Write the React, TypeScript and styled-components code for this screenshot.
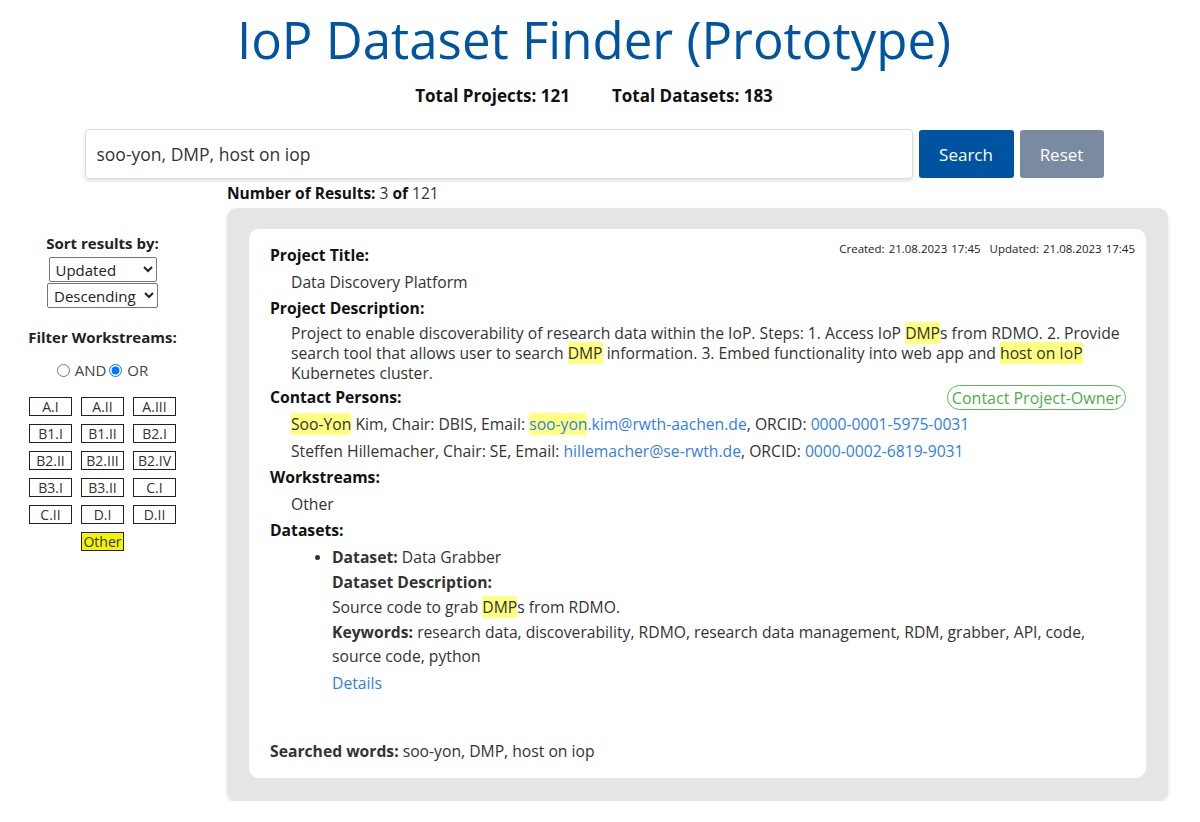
import styled, { createGlobalStyle } from 'styled-components'

const GlobalStyle = createGlobalStyle`
    body {
        margin: 0;
        background: #ffffff;
        font-family: "Open Sans", "Noto Sans", sans-serif;
        color: #333333;
    }
`

const Page = styled.div`
    width: 1188px;
    display: flex;
    flex-direction: column;
    align-items: center;
`

const Title = styled.h1`
    margin: 7px 0 0 0;
    font-size: 51px;
    font-weight: 500;
    color: #0055a2;
    line-height: 64px;
`

const Stats = styled.div`
    display: flex;
    gap: 42px;
    margin-top: 13px;
    font-size: 17px;
    font-weight: 700;
    color: #111;
`

const SearchRow = styled.form`
    display: flex;
    gap: 6px;
    margin-top: 22px;
    align-items: center;
`

const SearchInput = styled.input`
    width: 828px;
    height: 50px;
    box-sizing: border-box;
    border: 1px solid #dcdcdc;
    border-radius: 4px;
    box-shadow: 0 2px 4px rgba(0, 0, 0, 0.12);
    padding: 0 11px;
    font-family: inherit;
    font-size: 17.5px;
    color: #333;
`

const Button = styled.button<{ $variant: 'primary' | 'muted' }>`
    height: 48px;
    padding: 0 18px;
    border: none;
    border-radius: 3px;
    font-family: inherit;
    font-size: 17px;
    color: #fff;
    background: ${p => (p.$variant === 'primary' ? '#0053a0' : '#7a8ba1')};
    min-width: ${p => (p.$variant === 'primary' ? '95px' : '84px')};
`

const Body = styled.div`
    display: flex;
    align-self: stretch;
`

const Sidebar = styled.aside`
    width: 205px;
    display: flex;
    flex-direction: column;
    align-items: center;
    padding-top: 54px;
    flex-shrink: 0;
`

const SideHeading = styled.div`
    font-size: 15px;
    font-weight: 700;
    color: #222;
    margin-bottom: 4px;
`

const SelectStack = styled.div`
    display: flex;
    flex-direction: column;
    align-items: center;
    gap: 1px;
    margin-bottom: 19px;
`

const Select = styled.select<{ $w: number }>`
    width: ${p => p.$w}px;
    font-family: inherit;
    font-size: 15px;
    height: 25px;
    border: 1px solid #767676;
    border-radius: 2px;
    background: #fff;
    color: #222;
    padding: 0 2px;
`

const RadioRow = styled.div`
    display: flex;
    align-items: center;
    gap: 3px;
    font-size: 15px;
    color: #444;
    margin: 9px 0 17px;

    input {
        margin: 0 2px 0 0;
        width: 13px;
        height: 13px;
    }
`

const WsGrid = styled.div`
    display: grid;
    grid-template-columns: repeat(3, 43px);
    column-gap: 9px;
    row-gap: 8px;
    justify-items: center;
`

const WsButton = styled.button<{ $active?: boolean }>`
    width: 43px;
    height: 19px;
    padding: 0;
    box-sizing: border-box;
    border: 1.5px solid #222;
    background: ${p => (p.$active ? '#f4f400' : '#fff')};
    font-family: inherit;
    font-size: 14px;
    color: #333;
    line-height: 15px;
    white-space: nowrap;
`

const Main = styled.main`
    flex: 1;
    padding-left: 22px;
    padding-right: 20px;
    margin-top: 3px;
`

const ResultCount = styled.div`
    font-size: 15.5px;
    color: #333;
    margin-bottom: 4px;

    b {
        color: #111;
    }
`

const Panel = styled.section`
    background: #e5e5e5;
    border-radius: 10px;
    padding: 21px 22px 23px;
    box-shadow: 0 2px 4px rgba(0, 0, 0, 0.12);
`

const Card = styled.article`
    background: #fff;
    border-radius: 10px;
    padding: 10px 21px 16px;
    position: relative;
    font-size: 15.7px;
`

const Dates = styled.div`
    position: absolute;
    top: 12px;
    right: 11px;
    font-size: 11.5px;
    color: #222;
    word-spacing: 1px;

    span + span {
        margin-left: 9px;
    }
`

const Label = styled.div<{ $gap?: number }>`
    font-weight: 700;
    color: #111;
    line-height: 22px;
    margin-top: ${p => p.$gap ?? 5}px;
`

const Value = styled.div<{ $gap?: number }>`
    padding-left: 21px;
    line-height: 20px;
    margin-top: ${p => p.$gap ?? 6}px;
`

const ContactHeader = styled.div`
    display: flex;
    justify-content: space-between;
    align-items: center;
`

const ContactButton = styled.button`
    height: 25px;
    border: 1px solid #5cb85c;
    border-radius: 13px;
    background: #fff;
    color: #4cae4c;
    font-family: inherit;
    font-size: 16px;
    padding: 0 4px;
    margin-right: -1px;
    margin-top: 2px;
`

const ContactLine = styled.div<{ $gap?: number }>`
    padding-left: 21px;
    line-height: 22px;
    margin-top: ${p => p.$gap ?? 5}px;
`

const Link = styled.a`
    color: #2f80ed;
    text-decoration: none;
`

const Mark = styled.mark`
    background: #ffff80;
    color: inherit;
    padding: 0;
`

const DatasetList = styled.ul`
    margin: 4px 0 0 0;
    padding-left: 62px;
    line-height: 24px;

    li::marker {
        font-size: 14px;
    }
`

const DatasetLine = styled.div<{ $gap?: number }>`
    margin-top: ${p => p.$gap ?? 1}px;
`

const Searched = styled.div`
    margin-top: 45px;
    line-height: 22px;
`

const workstreams = [
    'A.I', 'A.II', 'A.III',
    'B1.I', 'B1.II', 'B2.I',
    'B2.II', 'B2.III', 'B2.IV',
    'B3.I', 'B3.II', 'C.I',
    'C.II', 'D.I', 'D.II',
]

export default function App() {
    return (
        <>
            <GlobalStyle />
            <Page>
                <Title>IoP Dataset Finder (Prototype)</Title>
                <Stats>
                    <span>Total Projects: 121</span>
                    <span>Total Datasets: 183</span>
                </Stats>
                <SearchRow onSubmit={e => e.preventDefault()}>
                    <SearchInput defaultValue="soo-yon, DMP, host on iop" />
                    <Button $variant="primary">Search</Button>
                    <Button $variant="muted" type="button">Reset</Button>
                </SearchRow>

                <Body>
                    <Sidebar>
                        <SideHeading>Sort results by:</SideHeading>
                        <SelectStack>
                            <Select $w={108} defaultValue="updated">
                                <option value="updated">Updated</option>
                                <option value="created">Created</option>
                            </Select>
                            <Select $w={111} defaultValue="desc">
                                <option value="desc">Descending</option>
                                <option value="asc">Ascending</option>
                            </Select>
                        </SelectStack>
                        <SideHeading>Filter Workstreams:</SideHeading>
                        <RadioRow>
                            <input type="radio" name="mode" id="and" />
                            <label htmlFor="and">AND</label>
                            <input type="radio" name="mode" id="or" defaultChecked />
                            <label htmlFor="or">OR</label>
                        </RadioRow>
                        <WsGrid>
                            {workstreams.map(w => (
                                <WsButton key={w}>{w}</WsButton>
                            ))}
                            <span />
                            <WsButton $active>Other</WsButton>
                        </WsGrid>
                    </Sidebar>

                    <Main>
                        <ResultCount>
                            <b>Number of Results:</b> 3 <b>of</b> 121
                        </ResultCount>
                        <Panel>
                            <Card>
                                <Dates>
                                    <span>Created: 21.08.2023 17:45</span>
                                    <span>Updated: 21.08.2023 17:45</span>
                                </Dates>
                                <Label>Project Title:</Label>
                                <Value>Data Discovery Platform</Value>
                                <Label>Project Description:</Label>
                                <Value $gap={4}>
                                    Project to enable discoverability of research data within the IoP. Steps: 1. Access IoP <Mark>DMP</Mark>s from RDMO. 2. Provide search tool that allows user to search <Mark>DMP</Mark> information. 3. Embed functionality into web app and <Mark>host on IoP</Mark> Kubernetes cluster.
                                </Value>
                                <ContactHeader>
                                    <Label $gap={0}>Contact Persons:</Label>
                                    <ContactButton>Contact Project-Owner</ContactButton>
                                </ContactHeader>
                                <ContactLine $gap={3}>
                                    <Mark>Soo-Yon</Mark> Kim, Chair: DBIS, Email: <Link href="#"><Mark>soo-yon</Mark>.kim@rwth-aachen.de</Link>, ORCID: <Link href="#">0000-0001-5975-0031</Link>
                                </ContactLine>
                                <ContactLine>
                                    Steffen Hillemacher, Chair: SE, Email: <Link href="#">hillemacher@se-rwth.de</Link>, ORCID: <Link href="#">0000-0002-6819-9031</Link>
                                </ContactLine>
                                <Label $gap={4}>Workstreams:</Label>
                                <Value>Other</Value>
                                <Label>Datasets:</Label>
                                <DatasetList>
                                    <li>
                                        <DatasetLine><b>Dataset:</b> Data Grabber</DatasetLine>
                                        <DatasetLine><b>Dataset Description:</b></DatasetLine>
                                        <DatasetLine>Source code to grab <Mark>DMP</Mark>s from RDMO.</DatasetLine>
                                        <DatasetLine>
                                            <b>Keywords:</b> research data, discoverability, RDMO, research data management, RDM, grabber, API, code, source code, python
                                        </DatasetLine>
                                        <DatasetLine $gap={3}><Link href="#">Details</Link></DatasetLine>
                                    </li>
                                </DatasetList>
                                <Searched>
                                    <b>Searched words:</b> soo-yon, DMP, host on iop
                                </Searched>
                            </Card>
                        </Panel>
                    </Main>
                </Body>
            </Page>
        </>
    )
}
